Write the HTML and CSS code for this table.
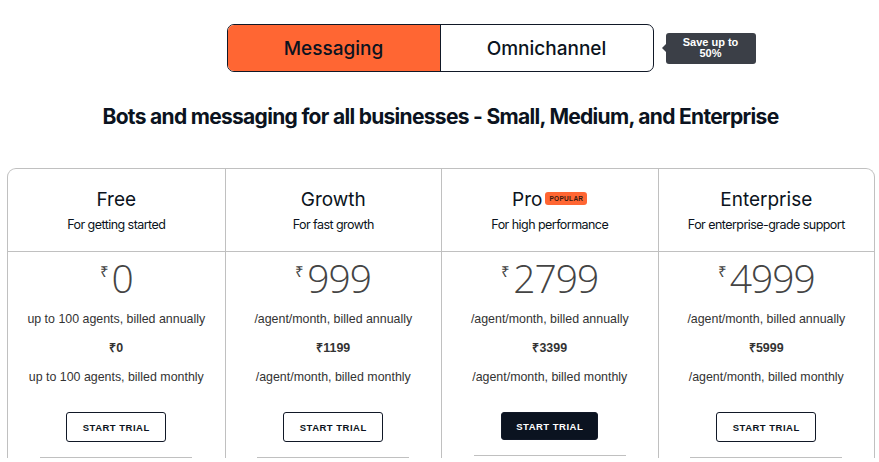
FILE: index.html
```html
<!DOCTYPE html>
<html>
<head>
<meta charset="utf-8">
<link rel="stylesheet" href="styles.css">
</head>
<body>
<div class="toggle-wrap">
  <div class="toggle">
    <div class="seg active">Messaging</div>
    <div class="seg">Omnichannel</div>
    <div class="tip">Save up to<br>50%</div>
  </div>
</div>
<h1 class="heading">Bots and messaging for all businesses - Small, Medium, and Enterprise</h1>
<div class="table">
  <div class="col">
    <div class="head">
      <div class="title">Free</div>
      <div class="sub">For getting started</div>
    </div>
    <div class="body">
      <div class="price"><span class="cur">₹</span><span class="num">0</span></div>
      <div class="line">up to 100 agents, billed annually</div>
      <div class="line bold">₹0</div>
      <div class="line">up to 100 agents, billed monthly</div>
      <div class="btn">START TRIAL</div>
      <div class="rule"></div>
    </div>
  </div>
  <div class="col">
    <div class="head">
      <div class="title">Growth</div>
      <div class="sub">For fast growth</div>
    </div>
    <div class="body">
      <div class="price"><span class="cur">₹</span><span class="num">999</span></div>
      <div class="line">/agent/month, billed annually</div>
      <div class="line bold">₹1199</div>
      <div class="line">/agent/month, billed monthly</div>
      <div class="btn">START TRIAL</div>
      <div class="rule"></div>
    </div>
  </div>
  <div class="col">
    <div class="head">
      <div class="title">Pro<span class="badge">POPULAR</span></div>
      <div class="sub">For high performance</div>
    </div>
    <div class="body">
      <div class="price"><span class="cur">₹</span><span class="num">2799</span></div>
      <div class="line">/agent/month, billed annually</div>
      <div class="line bold">₹3399</div>
      <div class="line">/agent/month, billed monthly</div>
      <div class="btn dark">START TRIAL</div>
      <div class="rule"></div>
    </div>
  </div>
  <div class="col">
    <div class="head">
      <div class="title">Enterprise</div>
      <div class="sub">For enterprise-grade support</div>
    </div>
    <div class="body">
      <div class="price"><span class="cur">₹</span><span class="num">4999</span></div>
      <div class="line">/agent/month, billed annually</div>
      <div class="line bold">₹5999</div>
      <div class="line">/agent/month, billed monthly</div>
      <div class="btn">START TRIAL</div>
      <div class="rule"></div>
    </div>
  </div>
</div>
</body>
</html>
```
FILE: styles.css
```css
* { box-sizing: border-box; }
html, body { margin: 0; padding: 0; background: #fff; }
body {
  font-family: "Liberation Sans", Arial, sans-serif;
  color: #111827;
  width: 879px;
  height: 462px;
  overflow: hidden;
}
.toggle-wrap {
  display: flex;
  justify-content: center;
  padding-top: 24px;
  padding-left: 1px;
}
.toggle {
  position: relative;
  display: flex;
  width: 427px;
  height: 48px;
  border: 1px solid #111827;
  border-radius: 7px;
}
.seg {
  flex: 1;
  display: flex;
  align-items: center;
  justify-content: center;
  font-family: Inter, sans-serif;
  font-size: 19px;
  font-weight: 500;
  color: #0b1320;
  border-radius: 6px 0 0 6px;
}
.seg.active {
  background: #ff6633;
  border-right: 1px solid #111827;
}
.tip {
  position: absolute;
  left: 438px;
  top: 8px;
  width: 90px;
  height: 31px;
  background: #3b3f47;
  color: #fff;
  border-radius: 3px;
  font-family: "Liberation Sans", Arial, sans-serif;
  font-weight: 700;
  font-size: 11px;
  line-height: 11px;
  text-align: center;
  padding-top: 4px;
}
.tip::before {
  content: "";
  position: absolute;
  left: -4px;
  top: 11px;
  border-top: 4px solid transparent;
  border-bottom: 4px solid transparent;
  border-right: 4px solid #3b3f47;
}
.heading {
  margin: 31px 0 0;
  text-align: center;
  font-family: Inter, sans-serif;
  font-size: 21px;
  font-weight: 700;
  letter-spacing: -0.7px;
  color: #0b1320;
  line-height: 28px;
  padding-left: 2px;
}
.table {
  margin: 37px 4px 0 7px;
  display: grid;
  grid-template-columns: repeat(4, 1fr);
  border: 1px solid #c0c0c0;
  border-bottom: none;
  border-radius: 9px 9px 0 0;
}
.col { border-left: 1px solid #c0c0c0; }
.col:first-child { border-left: none; }
.head {
  height: 83px;
  border-bottom: 1px solid #c0c0c0;
  display: flex;
  flex-direction: column;
  align-items: center;
  padding-top: 20px;
}
.title {
  font-family: Inter, sans-serif;
  font-size: 19px;
  line-height: 22px;
  color: #0b1320;
  display: flex;
  align-items: center;
}
.badge {
  margin-left: 3px;
  background: #ff6633;
  color: #3a1a10;
  font-family: "Liberation Sans", Arial, sans-serif;
  font-size: 6.5px;
  font-weight: 700;
  letter-spacing: 0.3px;
  line-height: 13px;
  height: 13px;
  padding: 0 4px;
  border-radius: 3px;
  margin-top: -3px;
}
.sub {
  margin-top: 6px;
  font-family: Inter, sans-serif;
  font-size: 12.5px;
  letter-spacing: -0.55px;
  color: #0b1320;
}
.body {
  display: flex;
  flex-direction: column;
  align-items: center;
}
.price {
  display: flex;
  align-items: flex-start;
  height: 50px;
  margin-top: 3px;
  color: #444;
}
.cur {
  font-size: 15px;
  margin-top: 6px;
  margin-right: 3px;
}
.num {
  font-family: "Open Sans", sans-serif;
  font-size: 39px;
  font-weight: 300;
  line-height: 46px;
  letter-spacing: -1px;
}
.line {
  font-size: 12.4px;
  line-height: 29px;
  color: #333;
}
.line.bold { font-weight: 700; }
.btn {
  margin-top: 20px;
  width: 100px;
  height: 30px;
  border: 1px solid #111827;
  border-radius: 3px;
  display: flex;
  align-items: center;
  justify-content: center;
  font-size: 9.5px;
  font-weight: 700;
  letter-spacing: 0.5px;
  color: #0b1320;
}
.btn.dark {
  background: #0b1320;
  color: #fff;
  width: 97px;
  height: 28px;
}
.rule {
  margin-top: 15px;
  width: 152px;
  border-top: 1px solid #c0c0c0;
}
```
